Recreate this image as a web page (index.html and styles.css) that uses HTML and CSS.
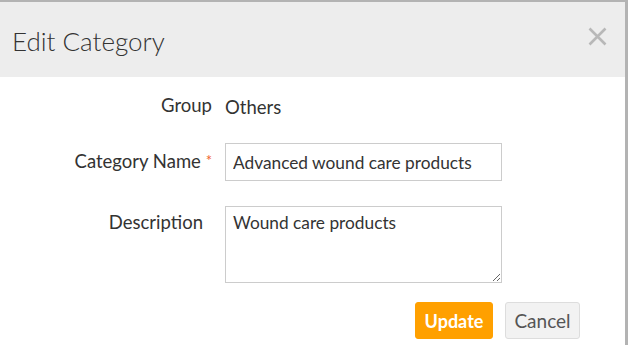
FILE: index.html
```html
<!DOCTYPE html>
<html lang="en">
<head>
  <meta charset="UTF-8" />
  <title>Edit Category</title>
  <link rel="stylesheet" href="styles.css">
</head>
<body>
  <div class="modal">
    <div class="modal-header">
      <h2>Edit Category</h2>
      <button class="close" type="button" aria-label="Close">
        <svg width="19" height="19" viewBox="0 0 19 19">
          <path d="M1.5 1.5 L17.5 17.5 M17.5 1.5 L1.5 17.5" stroke="#b8b8b8" stroke-width="2.6" fill="none" />
        </svg>
      </button>
    </div>
    <form class="modal-body">
      <div class="row row-static">
        <label>Group</label>
        <div class="value">Others</div>
      </div>
      <div class="row">
        <label for="cat-name">Category Name <span class="req">*</span></label>
        <input type="text" id="cat-name" value="Advanced wound care products" />
      </div>
      <div class="row">
        <label for="desc" class="label-area">Description</label>
        <textarea id="desc">Wound care products</textarea>
      </div>
      <div class="actions">
        <button type="submit" class="btn btn-primary">Update</button>
        <button type="button" class="btn btn-default">Cancel</button>
      </div>
    </form>
  </div>
</body>
</html>
```

FILE: styles.css
```css
body {
  margin: 0;
  background: #b3b3b3;
  font-family: Lato, 'Open Sans', sans-serif;
  color: #333;
}

.modal {
  width: 625px;
  height: 343px;
  margin-top: 2px;
  background: #fff;
}

.modal-header {
  height: 75px;
  background: #ededed;
  display: flex;
  align-items: center;
  justify-content: space-between;
  padding: 0 18px 0 12px;
}

.modal-header h2 {
  margin: 0;
  font-size: 26px;
  font-weight: 300;
  color: #333;
  position: relative;
  top: 1px;
}

.close {
  border: none;
  background: none;
  padding: 0;
  display: flex;
  cursor: pointer;
  position: relative;
  top: -3px;
}

.modal-body {
  padding-top: 16px;
}

.row {
  display: grid;
  grid-template-columns: 212px 277px;
  column-gap: 13px;
  margin-bottom: 25px;
}

.row label {
  text-align: right;
  font-size: 18.5px;
  line-height: 24px;
  padding-top: 5px;
}

.row .label-area {
  padding-top: 4px;
  padding-right: 9px;
}

.row-static label {
  padding-top: 0;
}

.row-static .value {
  font-size: 18.5px;
  line-height: 24px;
  padding-top: 2px;
}

.row-static {
  margin-bottom: 24px;
}

.req {
  color: #f0622a;
  font-size: 15px;
  vertical-align: 2px;
}

input, textarea {
  box-sizing: border-box;
  width: 277px;
  border: 1px solid #ccc;
  font-family: Lato, sans-serif;
  font-size: 17.3px;
  color: #333;
  padding: 0 7px;
  margin: 0;
  outline: none;
}

input {
  height: 38px;
}

textarea {
  height: 77px;
  padding-top: 5px;
  resize: vertical;
}

.actions {
  display: flex;
  gap: 12px;
  padding-left: 415px;
  margin-top: -6px;
}

.btn {
  height: 37px;
  font-family: Lato, sans-serif;
  font-size: 19px;
  border-radius: 3px;
  padding: 0;
  cursor: pointer;
}

.btn-primary {
  width: 78px;
  background: #ffa000;
  border: 1px solid #ffa000;
  color: #fff;
  font-size: 18px;
  font-weight: 700;
}

.btn-default {
  width: 75px;
  background: #f2f2f2;
  border: 1px solid #ddd;
  color: #555;
}
```
